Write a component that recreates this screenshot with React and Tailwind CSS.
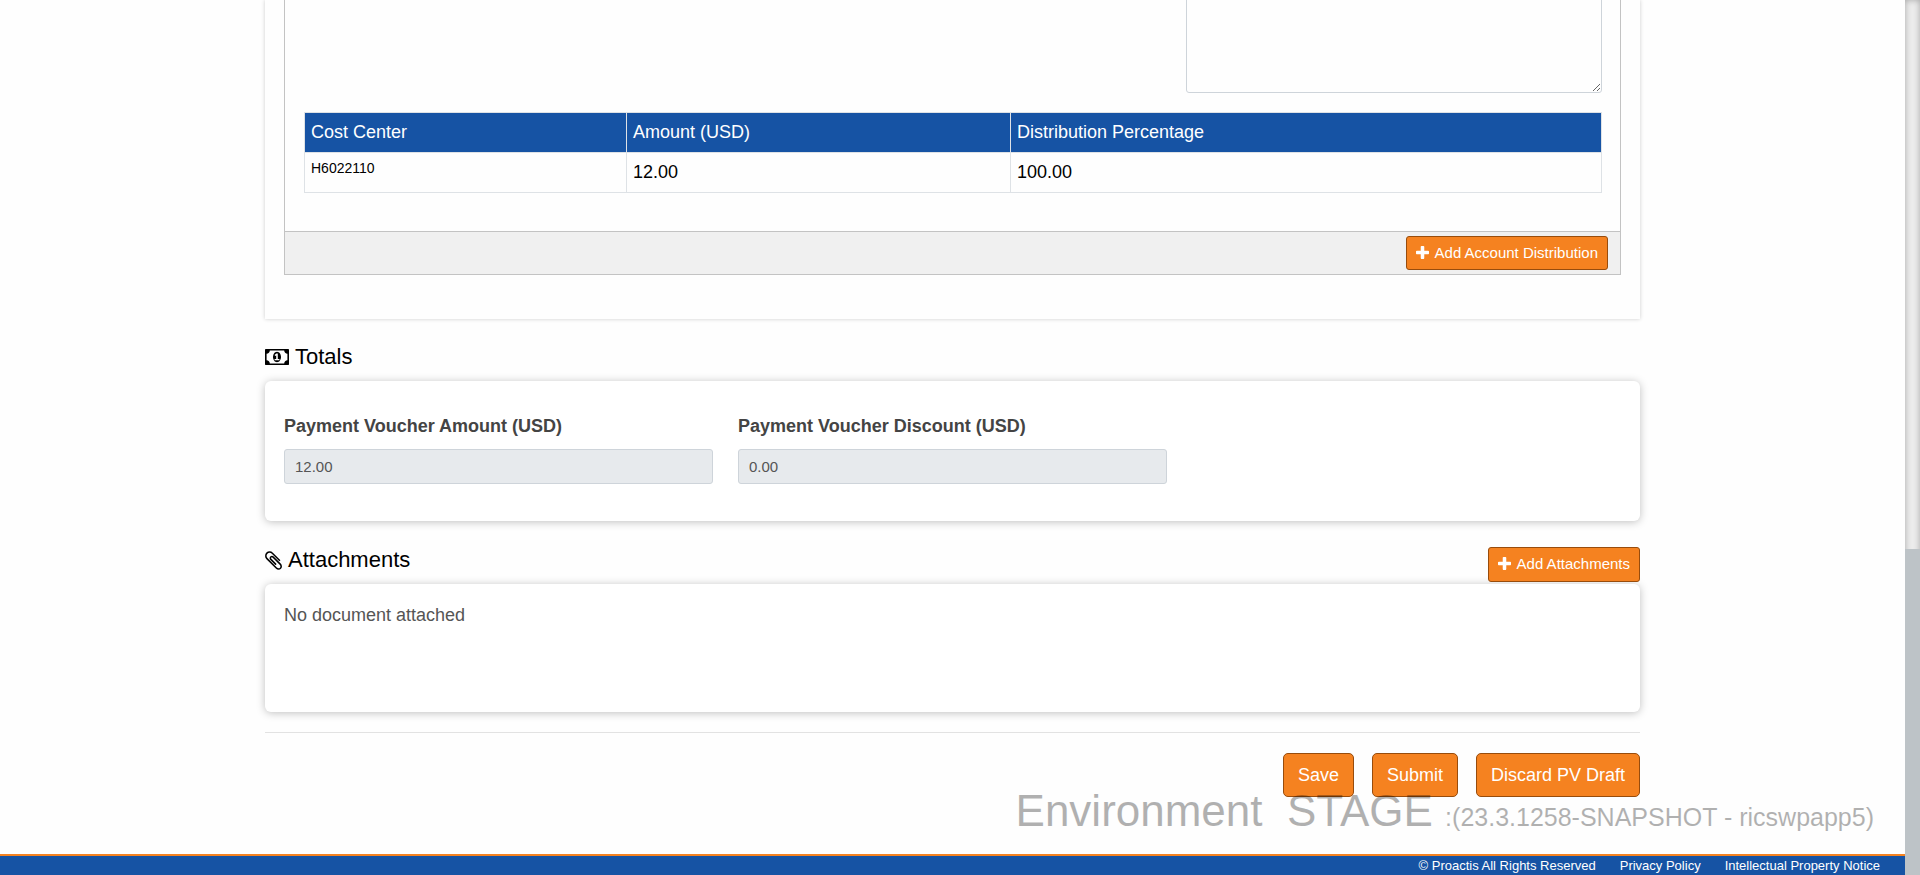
import React from "react";

function PlusIcon() {
  return (
    <svg viewBox="192 128 1408 1408" className="size-[13px] fill-current" aria-hidden="true">
      <path d="M1600 736v192q0 40-28 68t-68 28h-416v416q0 40-28 68t-68 28h-192q-40 0-68-28t-28-68v-416h-416q-40 0-68-28t-28-68v-192q0-40 28-68t68-28h416v-416q0-40 28-68t68-28h192q40 0 68 28t28 68v416h416q40 0 68 28t28 68z" />
    </svg>
  );
}

function MoneyIcon() {
  return (
    <svg viewBox="0 256 1920 1280" className="h-4 w-6 fill-current" aria-hidden="true">
      <path d="M768 1152h384v-96h-128v-448h-114l-148 137 77 80q42-37 55-57h2v288h-128v96zm512-256q0 70-21 142t-59.5 134-101.5 101-138 39-138-39-101.5-101-59.5-134-21-142 21-142 59.5-134 101.5-101 138-39 138 39 101.5 101 59.5 134 21 142zm512 256v-512q-106 0-181-75t-75-181h-1152q0 106-75 181t-181 75v512q106 0 181 75t75 181h1152q0-106 75-181t181-75zm128-832v1152q0 26-19 45t-45 19h-1792q-26 0-45-19t-19-45v-1152q0-26 19-45t45-19h1792q26 0 45 19t19 45z" />
    </svg>
  );
}

function PaperclipIcon() {
  return (
    <svg viewBox="0 128 1408 1536" className="h-[19px] w-[17px] fill-current" aria-hidden="true">
      <path d="M1404 1385q0 117-79 196t-196 79q-135 0-235-100l-777-776q-113-115-113-271 0-159 110-270t269-111q158 0 273 113l605 606q10 10 10 22 0 16-30.5 46.5t-46.5 30.5q-13 0-23-10l-606-607q-79-77-181-77-106 0-179 75t-73 181q0 105 76 181l776 777q63 63 145 63 64 0 106-42t42-106q0-82-63-145l-581-581q-26-24-60-24-29 0-48 19t-19 48q0 32 25 59l410 410q10 10 10 22 0 16-31 47t-47 31q-12 0-22-10l-410-410q-63-61-63-149 0-82 57-139t139-57q88 0 149 63l581 581q100 98 100 235z" />
    </svg>
  );
}

function SmallButton({ children, className = "" }) {
  return (
    <button
      type="button"
      className={
        "flex items-center gap-[6px] rounded-[3px] border border-[#984c0c] bg-[#f58220] px-[9px] pb-0.5 text-[15px] leading-none text-white " +
        className
      }
    >
      <PlusIcon />
      {children}
    </button>
  );
}

function ActionButton({ children }) {
  return (
    <button
      type="button"
      className="h-11 rounded-[5px] border border-[#984c0c] bg-[#f58220] px-3.5 text-lg leading-none text-white"
    >
      {children}
    </button>
  );
}

function ReadOnlyField({ id, label, value }) {
  return (
    <div>
      <label htmlFor={id} className="block text-lg leading-[27px] font-bold text-[#444]">
        {label}
      </label>
      <input
        id={id}
        type="text"
        readOnly
        defaultValue={value}
        className="mt-[9px] block h-[35px] w-full rounded-[3px] border border-[#ced4da] bg-[#e7eaed] px-2.5 text-[15px] text-[#555]"
      />
    </div>
  );
}

const headings = "border border-[#dee2e6] px-1.5 py-1.5 text-left font-normal text-white";

export default function App() {
  return (
    <div className="flex h-screen overflow-hidden bg-[#fefefe] font-['Liberation_Sans',Arial,sans-serif] text-black">
      <div className="relative flex min-w-0 flex-1 flex-col">
        <main className="mx-auto w-full max-w-[1375px] flex-1">
          <section className="px-[19px] pb-11 shadow-[0_0_4px_rgba(0,0,0,0.2)]">
            <div className="border-x border-b border-[#c3c3c3]">
              <div className="pr-[18px] pb-[38px] pl-[19px]">
                <div className="flex justify-end">
                  <textarea
                    aria-label="Notes"
                    className="-mt-2 block h-[101px] w-[416px] rounded-[3px] border border-[#ced4da]"
                  />
                </div>
                <table className="mt-[19px] w-full table-fixed border-collapse text-lg leading-[27px]">
                  <colgroup>
                    <col className="w-[322px]" />
                    <col className="w-[384px]" />
                    <col />
                  </colgroup>
                  <thead className="bg-[#1653a4]">
                    <tr>
                      <th className={headings}>Cost Center</th>
                      <th className={headings}>Amount (USD)</th>
                      <th className={headings}>Distribution Percentage</th>
                    </tr>
                  </thead>
                  <tbody>
                    <tr>
                      <td className="border border-[#dee2e6] px-1.5 py-1.5 align-top text-sm leading-[18px]">H6022110</td>
                      <td className="border border-[#dee2e6] px-1.5 py-1.5">12.00</td>
                      <td className="border border-[#dee2e6] px-1.5 py-1.5">100.00</td>
                    </tr>
                  </tbody>
                </table>
              </div>
              <div className="flex justify-end border-t border-[#c3c3c3] bg-[#f0f0f0] px-3 py-1">
                <SmallButton className="h-[34px]">Add Account Distribution</SmallButton>
              </div>
            </div>
          </section>

          <h2 className="mt-[26px] mb-3 flex h-6 items-center gap-1.5 text-[22px] leading-6">
            <MoneyIcon />
            Totals
          </h2>
          <section className="grid grid-cols-3 gap-[25px] rounded-md bg-white px-[19px] pt-8 pb-[37px] shadow-[0_1px_8px_rgba(0,0,0,0.25)]">
            <ReadOnlyField id="voucher-amount" label="Payment Voucher Amount (USD)" value="12.00" />
            <ReadOnlyField id="voucher-discount" label="Payment Voucher Discount (USD)" value="0.00" />
          </section>

          <div className="mt-[26px] mb-0.5 flex items-start justify-between">
            <h2 className="flex h-[26px] items-center gap-1.5 text-[22px] leading-6">
              <PaperclipIcon />
              Attachments
            </h2>
            <SmallButton className="h-[35px]">Add Attachments</SmallButton>
          </div>
          <section className="min-h-32 rounded-md bg-white px-[19px] pt-[18px] shadow-[0_1px_8px_rgba(0,0,0,0.25)]">
            <p className="text-lg leading-[27px] text-[#555]">No document attached</p>
          </section>

          <hr className="mt-5 border-[#e2e2e2]" />
          <div className="mt-5 flex justify-end gap-[18px]">
            <ActionButton>Save</ActionButton>
            <ActionButton>Submit</ActionButton>
            <ActionButton>Discard PV Draft</ActionButton>
          </div>
        </main>

        <div className="pointer-events-none absolute right-[31px] bottom-[30px] text-[44px] leading-[56px] whitespace-pre opacity-30">
          Environment{"  "}STAGE <span className="text-[25px]">:(23.3.1258-SNAPSHOT - ricswpapp5)</span>
        </div>

        <footer className="flex h-[21px] items-center justify-end gap-6 border-t-2 border-[#f58220] bg-[#1653a4] pr-[25px] text-[13px] leading-none text-white">
          <span>© Proactis All Rights Reserved</span>
          <a href="#privacy">Privacy Policy</a>
          <a href="#ip-notice">Intellectual Property Notice</a>
        </footer>
      </div>

      <div className="flex w-[15px] flex-col bg-[#ececec] shadow-[inset_0_0_6px_rgba(0,0,0,0.3)]" aria-hidden="true">
        <div className="basis-[549px]" />
        <div className="flex-1 bg-[#bdc3c7]" />
      </div>
    </div>
  );
}
